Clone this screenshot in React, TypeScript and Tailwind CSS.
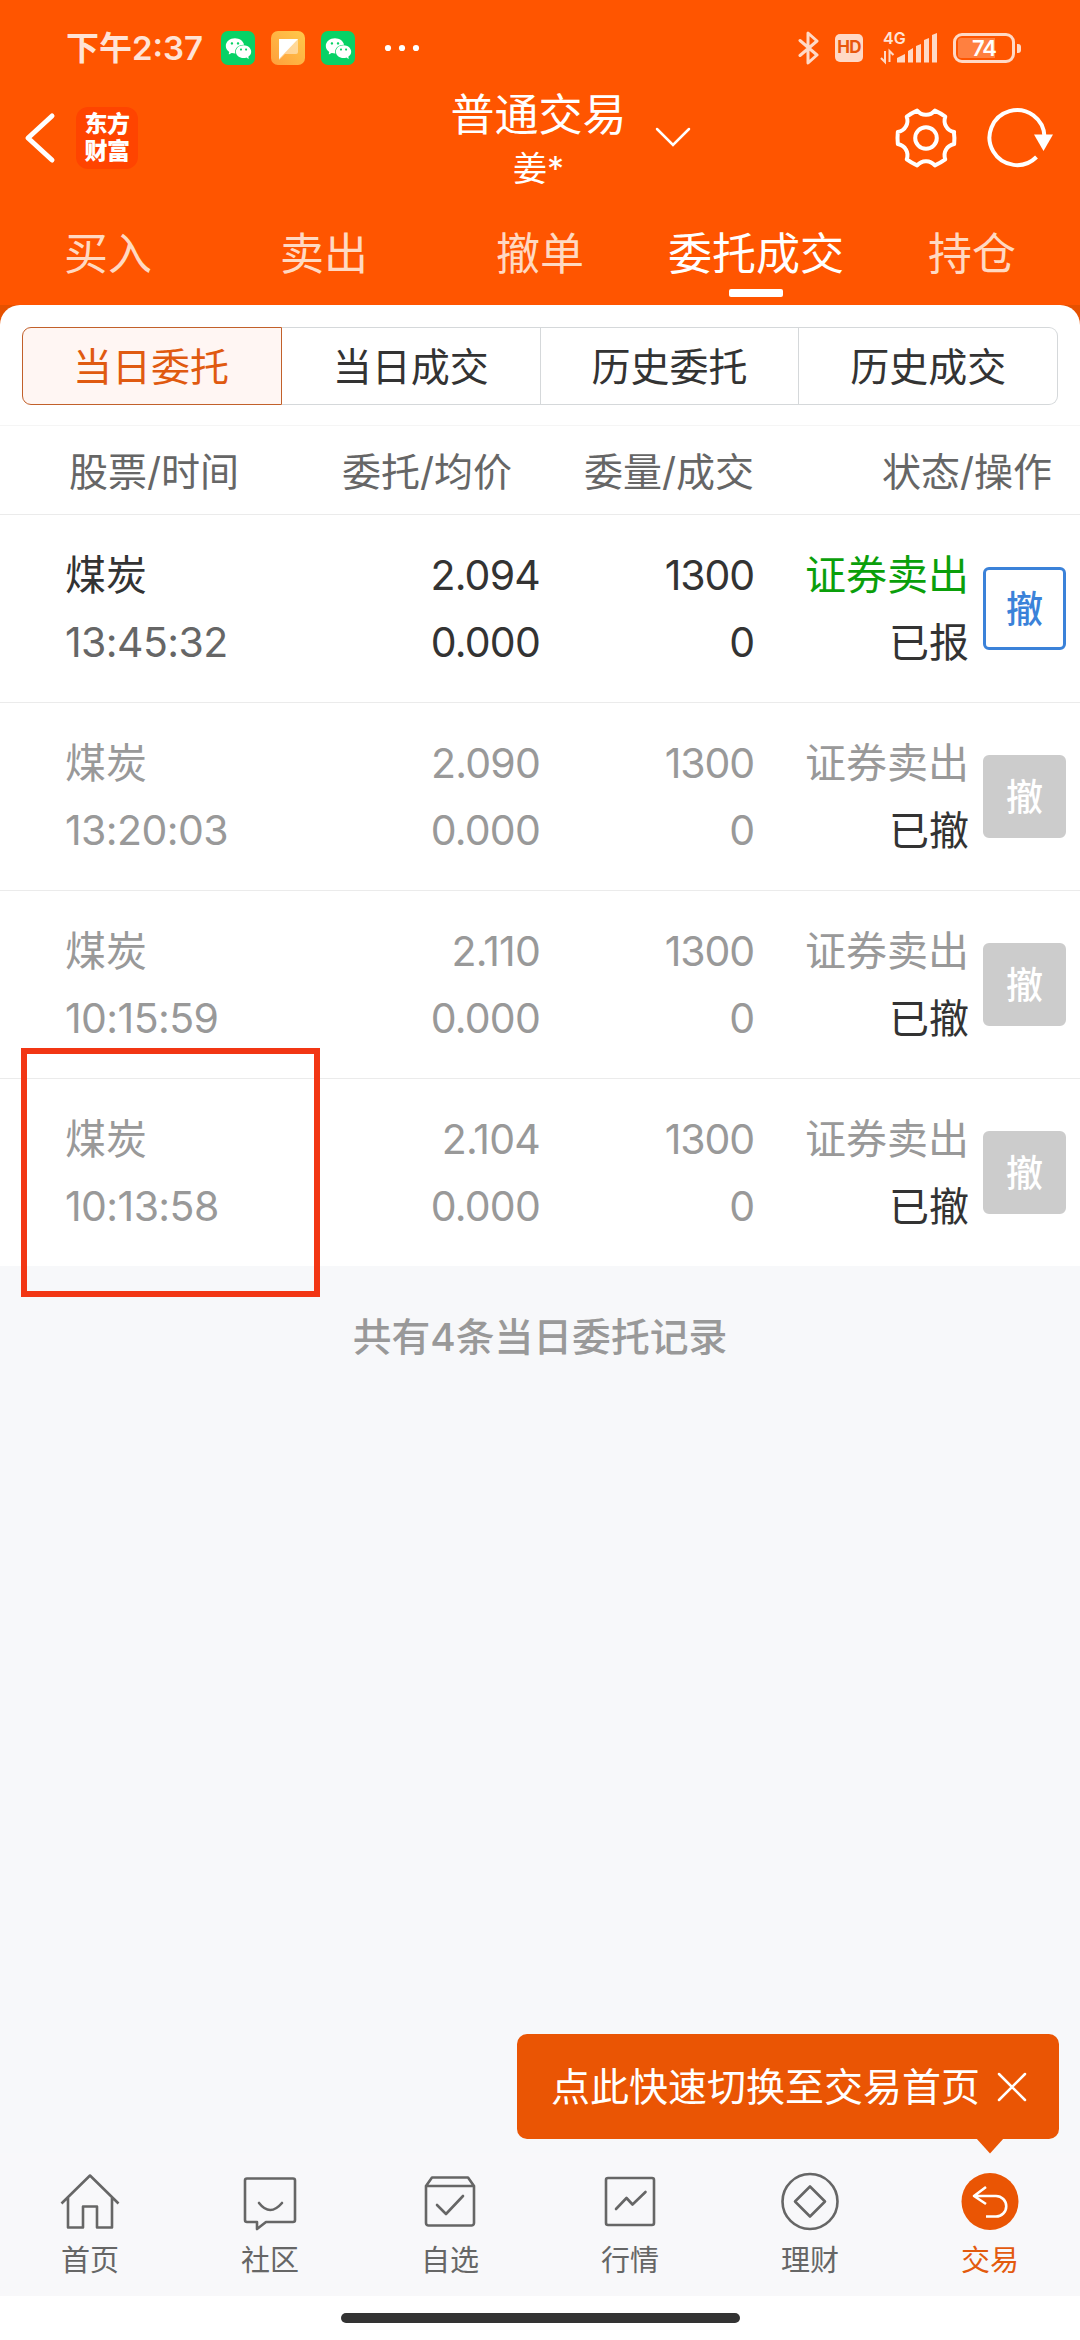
import React from "react";
import { AiFillWechat } from "react-icons/ai";

const FONT = "font-['Inter','Noto_Sans_CJK_SC',sans-serif]";

type Order = { time: string; price: string; status: string; active: boolean };

const orders: Order[] = [
  { time: "13:45:32", price: "2.094", status: "已报", active: true },
  { time: "13:20:03", price: "2.090", status: "已撤", active: false },
  { time: "10:15:59", price: "2.110", status: "已撤", active: false },
  { time: "10:13:58", price: "2.104", status: "已撤", active: false },
];

function WechatBadge() {
  return (
    <div className="flex h-[34px] w-[34px] items-center justify-center rounded-[7px] bg-[#07d266] text-white">
      <AiFillWechat size={29} />
    </div>
  );
}

function StatusBar() {
  return (
    <div className="flex h-[88px] items-center pt-2 pr-[59px] pl-[66px] text-[#ffe3d6]">
      <div className="w-[155px] text-[33px] leading-[40px] font-semibold whitespace-nowrap">下午2:37</div>
      <div className="flex items-center gap-4">
        <WechatBadge />
        <svg width="34" height="34" viewBox="0 0 34 34">
          <defs>
            <linearGradient id="note" x1="0" y1="1" x2="1" y2="0">
              <stop offset="0" stopColor="#ff9f3c" />
              <stop offset="1" stopColor="#ffc94a" />
            </linearGradient>
          </defs>
          <rect width="34" height="34" rx="7" fill="url(#note)" />
          <path d="M8 8h19v13q0 2-2 2H14l-6 6z" fill="#fff" opacity=".45" />
          <path d="M8 8h19L8 28z" fill="#fff" />
        </svg>
        <WechatBadge />
      </div>
      <svg className="ml-[29px]" width="36" height="8" viewBox="0 0 36 8" fill="#fff">
        <circle cx="4" cy="4" r="3.1" />
        <circle cx="18" cy="4" r="3.1" />
        <circle cx="32" cy="4" r="3.1" />
      </svg>
      <div className="flex-1" />
      <svg width="22" height="36" viewBox="0 0 22 36" fill="none" stroke="#ffd9c6" strokeWidth="3" strokeLinejoin="round" strokeLinecap="round">
        <path d="M2 10.500L19 25L10 33V3L19 11L2 25.500" />
      </svg>
      <div className="ml-[15px] flex h-[28px] w-[28px] items-center justify-center rounded-[5px] bg-[#ffd9c6] text-[17px] font-bold tracking-[-0.8px] text-[#e8560c]">
        HD
      </div>
      <div className="relative ml-[17px] h-[34px] w-[58px]">
        <div className="absolute top-0 left-[3px] text-[16px] leading-[14px] font-semibold">4G</div>
        <svg width="58" height="34" viewBox="0 0 58 34" fill="#ffd9c6">
          <path d="M17 31.500V27l8-4v8.500zM28 31.500V20l5-3v14.500zM36 31.500V15l5-2v18.500zM44 31.500V9l5-2v24.500zM52 31.500V4l5-2v29.500z" />
          <path d="M5 20v11l-4-4M9.500 31V20l4 4" stroke="#ffd9c6" strokeWidth="2" fill="none" />
        </svg>
      </div>
      <div className="ml-[15px] flex h-[30px] w-[62px] items-center justify-center rounded-[9px] border-[3.500px] border-[#ffd9c6] p-[2px]">
        <div className="flex h-full w-full items-center justify-center rounded-[3px] bg-[linear-gradient(90deg,#ff8040_72%,transparent_72%)] text-[22px] leading-[20px] font-semibold tracking-[-1px] text-white">
          74
        </div>
      </div>
      <div className="ml-[2px] h-[9px] w-[4px] rounded-r-[3px] bg-[#ffd9c6]" />
    </div>
  );
}

function gearPath() {
  const point = (deg: number, r: number) => {
    const a = (deg * Math.PI) / 180;
    return `${(31 + r * Math.cos(a)).toFixed(2)} ${(31 + r * Math.sin(a)).toFixed(2)}`;
  };
  let d = `M${point(-12, 28.5)}`;
  for (let a = 0; a < 360; a += 60) {
    d += `Q${point(a, 28.8)} ${point(a + 12, 28.8)}Q${point(a + 18, 23.5)} ${point(a + 30, 23.2)}Q${point(a + 42, 23.5)} ${point(a + 48, 28.8)}`;
  }
  return d + "Z";
}

function Header() {
  return (
    <div className="flex h-[106px] items-center text-white">
      <div className="flex flex-1 items-center pb-[6px] pl-[23px]">
        <svg width="34" height="52" viewBox="0 0 34 52" fill="none" stroke="#fff" strokeWidth="5" strokeLinecap="round" strokeLinejoin="round">
          <path d="M29 4L5 26l24 22" />
        </svg>
        <div className="ml-[19px] flex h-[62px] w-[62px] flex-col items-center justify-center rounded-[12px] bg-[#ff4400] text-[23px] leading-[27px] font-extrabold tracking-[-0.5px]">
          <span>东方</span>
          <span>财富</span>
        </div>
      </div>
      <div className="relative pt-[2px] text-center">
        <div className="text-[44px] leading-[53px]">普通交易</div>
        <div className="text-[34px] leading-[53px]">姜*</div>
        <svg className="absolute top-[39px] left-[204px]" width="36" height="22" viewBox="0 0 36 22" fill="none" stroke="#fff" strokeWidth="2.500" strokeLinecap="round">
          <path d="M2 3l16 16L34 3" />
        </svg>
      </div>
      <div className="flex flex-1 items-center justify-end gap-[29px] pr-[26px] pb-[6px]">
        <svg width="62" height="62" viewBox="0 0 62 62" fill="none" stroke="#fff" strokeWidth="4" strokeLinejoin="round">
          <path d={gearPath()} />
          <circle cx="31" cy="31" r="10.800" />
        </svg>
        <svg width="68" height="62" viewBox="0 0 68 62" fill="none">
          <path d="M58.500 30A27.500 27.500 0 1 0 50.500 50" stroke="#fff" strokeWidth="4" />
          <path d="M48 27.500h19L57.500 44z" fill="#fff" />
        </svg>
      </div>
    </div>
  );
}

function Tabs() {
  const tabs = ["买入", "卖出", "撤单", "委托成交", "持仓"];
  return (
    <div className="flex h-[111px] pt-5 text-[44px] leading-[80px]">
      {tabs.map((t) =>
        t === "委托成交" ? (
          <div key={t} className="relative w-[216px] text-center whitespace-nowrap text-white">
            {t}
            <div className="absolute top-[75px] left-[81px] h-[8px] w-[54px] rounded-[2px] bg-white" />
          </div>
        ) : (
          <div key={t} className="w-[216px] text-center text-[#ffd9c2]">
            {t}
          </div>
        ),
      )}
    </div>
  );
}

function Segments() {
  const base = "flex-1 border-y border-r border-[#d5d8da] text-[#333]";
  return (
    <div className="mx-[22px] flex h-[78px] text-center text-[39px] leading-[78px]">
      <div className="w-[260px] rounded-l-[9px] border border-[#c2602a] bg-[#fff6f3] pr-[2px] text-[#e05a10]">当日委托</div>
      <div className={base}>当日成交</div>
      <div className={base}>历史委托</div>
      <div className={base + " rounded-r-[9px]"}>历史成交</div>
    </div>
  );
}

function OrderRow({ order, last }: { order: Order; last: boolean }) {
  const main = order.active ? "text-[#333]" : "text-[#999]";
  return (
    <div className={"relative flex pt-[27px] pl-[65px] text-[41px] leading-[67px] " + (last ? "h-[187px] " : "h-[188px] border-b border-[#ebebeb] ") + main}>
      <div className="w-[235px]">
        <div>煤炭</div>
        <div className={"tracking-[-0.6px] " + (order.active ? "text-[#666]" : "")}>{order.time}</div>
      </div>
      <div className="w-[240px] text-right tracking-[-0.8px]">
        <div>{order.price}</div>
        <div>0.000</div>
      </div>
      <div className="w-[214px] text-right tracking-[-1.1px]">
        <div>1300</div>
        <div>0</div>
      </div>
      <div className="w-[215px] text-right">
        <div className={order.active ? "text-[#0a9f0a]" : ""}>证券卖出</div>
        <div className="text-[40px] text-[#333]">{order.status}</div>
      </div>
      <div
        className={
          "mt-[25px] ml-[14px] h-[83px] w-[83px] rounded-[6px] border-[3px] text-center text-[37px] leading-[80px] font-medium " +
          (order.active ? "border-[#3b82d9] text-[#3b82d9]" : "border-[#ccc] bg-[#ccc] text-white")
        }
      >
        撤
      </div>
      {last && <div className="absolute top-[-31px] left-[21px] h-[249px] w-[299px] border-[6px] border-[#f23614]" />}
    </div>
  );
}

const navItems: { label: string; icon: React.ReactNode }[] = [
  {
    label: "首页",
    icon: <path d="M1.500 46.500L30 18.500l28.500 28M8 41v29.500h15V49.500h14v21h15V41" transform="translate(0 -14)" />,
  },
  {
    label: "社区",
    icon: (
      <>
        <path d="M7 7.500h46a2 2 0 0 1 2 2V49a2 2 0 0 1-2 2H26l-9 7v-7H7a2 2 0 0 1-2-2V9.500a2 2 0 0 1 2-2z" />
        <path d="M19 32q11 14 23 0" strokeLinecap="round" />
      </>
    ),
  },
  {
    label: "自选",
    icon: (
      <>
        <path d="M6 15l6-8.500h36L54 15v37a2.500 2.500 0 0 1-2.500 2.500h-43A2.500 2.500 0 0 1 6 52zM6 15h48" />
        <path d="M17 34l9 9 17-18" strokeLinecap="round" />
      </>
    ),
  },
  {
    label: "行情",
    icon: (
      <>
        <rect x="6" y="7" width="48" height="47" rx="2" />
        <path d="M16 38l10.500-11 6 6.500L45.500 21" strokeLinecap="round" />
      </>
    ),
  },
  {
    label: "理财",
    icon: (
      <>
        <circle cx="30" cy="30.500" r="27.500" />
        <path d="M30 15.500l15 15-15 15-15-15z" />
      </>
    ),
  },
  {
    label: "交易",
    icon: (
      <>
        <circle cx="30" cy="30.500" r="28.500" fill="#ea5504" stroke="none" />
        <path d="M26 16L14 25l12 8M14 25h22a10 10 0 0 1 0 20.500H26" stroke="#fff" />
      </>
    ),
  },
];

function BottomNav() {
  return (
    <div className="relative flex h-[143px] bg-[#f8f8fa] pt-[18px]">
      {navItems.map((n, i) => (
        <div key={n.label} className={"flex w-[180px] flex-col items-center " + (i === 5 ? "text-[#e35a0e]" : "text-[#666]")}>
          <svg width="60" height="60" viewBox="0 0 60 60" fill="none" stroke="#666" strokeWidth="2.600" strokeLinejoin="round">
            {n.icon}
          </svg>
          <div className="mt-[10px] text-[29px] leading-[40px]">{n.label}</div>
        </div>
      ))}
      <div className="absolute right-[21px] bottom-[157px] flex h-[105px] w-[542px] items-center rounded-[10px] bg-[#ea5504] pl-[34px] text-[39px] leading-[105px] whitespace-nowrap text-white">
        点此快速切换至交易首页
        <svg className="ml-[17px]" width="30" height="30" viewBox="0 0 30 30" fill="none" stroke="#fff" strokeWidth="2.500" strokeLinecap="round">
          <path d="M2 2l26 26M28 2L2 28" />
        </svg>
        <svg className="absolute top-[104px] left-[459px]" width="28" height="16" viewBox="0 0 28 16" fill="#ea5504">
          <path d="M0 0h28L14 15.500z" />
        </svg>
      </div>
    </div>
  );
}

export default function App() {
  return (
    <div className={"flex h-[2340px] w-[1080px] flex-col overflow-hidden bg-[#f7f8fa] " + FONT}>
      <div className="bg-[#ff5500]">
        <StatusBar />
        <Header />
        <Tabs />
      </div>
      <div className="bg-[linear-gradient(#e65100_20px,#f7f8fa_20px)]">
        <div className="rounded-t-[20px] bg-white pt-[22px]">
          <Segments />
          <div className="mt-5 flex h-[90px] border-y border-t-[#f5f5f5] border-b-[#ebebeb] pl-[69px] text-[39px] leading-[92px] whitespace-nowrap text-[#666]">
            <div className="w-[201px]">股票/时间</div>
            <div className="w-[242px] text-right">委托/均价</div>
            <div className="w-[242px] text-right">委量/成交</div>
            <div className="w-[298px] text-right">状态/操作</div>
          </div>
          {orders.map((o, i) => (
            <OrderRow key={o.time} order={o} last={i === orders.length - 1} />
          ))}
        </div>
      </div>
      <div className="flex-1 pt-[41px] text-center text-[38.800px] leading-[60px] font-medium text-[#999]">共有4条当日委托记录</div>
      <BottomNav />
      <div className="h-[44px] bg-white pt-[17px]">
        <div className="mx-auto h-[10px] w-[399px] rounded-full bg-[#333]" />
      </div>
    </div>
  );
}
